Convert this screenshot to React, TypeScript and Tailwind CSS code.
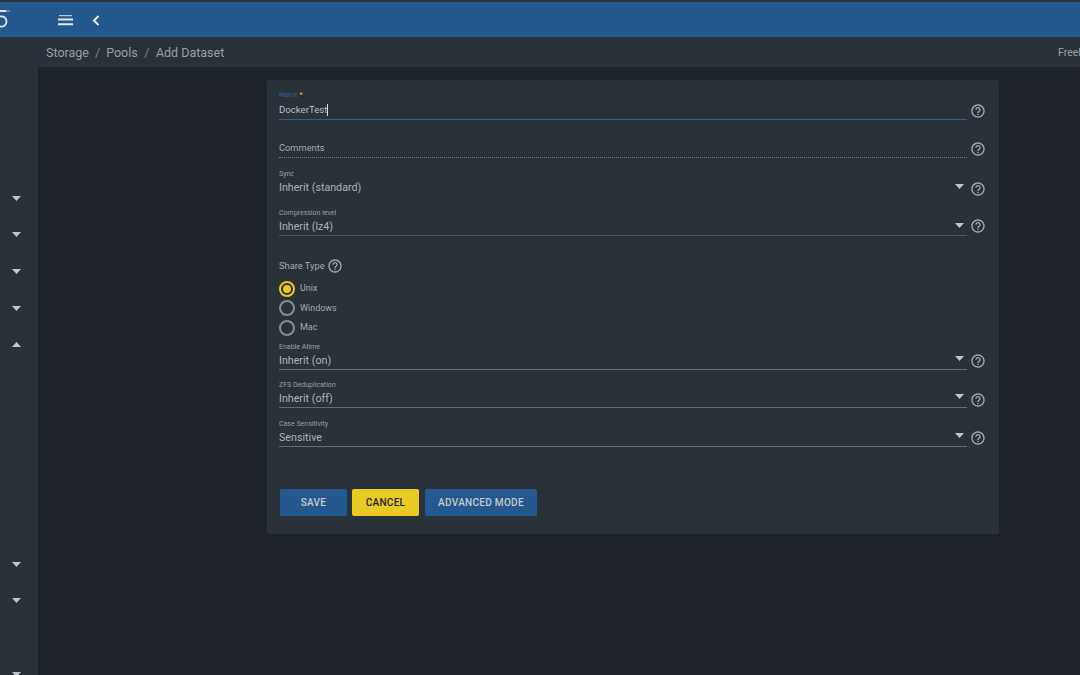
import type { ReactNode } from 'react';

const sidebarRows = ['down', 'down', 'down', 'down', 'up', '', '', '', '', '', 'down', 'down', '', 'down'];

function Caret({ up = false, className = '' }: { up?: boolean; className?: string }) {
  return (
    <svg width="9" height="5" viewBox="0 0 9 5" className={className}>
      <path d={up ? 'M0 5 4.5 0 9 5z' : 'M0 0h9L4.5 5z'} fill="#c0c5ca" />
    </svg>
  );
}

function Help({ className = '' }: { className?: string }) {
  return (
    <svg width="16" height="16" viewBox="0 0 24 24" className={className}>
      <path
        fill="#a6aaae"
        d="M11 18h2v-2h-2v2zm1-16C6.48 2 2 6.48 2 12s4.48 10 10 10 10-4.48 10-10S17.52 2 12 2zm0 18c-4.41 0-8-3.59-8-8s3.59-8 8-8 8 3.59 8 8-3.59 8-8 8zm0-14c-2.21 0-4 1.79-4 4h2c0-1.1.9-2 2-2s2 .9 2 2c0 2-3 1.75-3 5h2c0-2.25 3-2.5 3-5 0-2.21-1.79-4-4-4z"
      />
    </svg>
  );
}

function SelectField({
  label,
  value,
  className = '',
  line = 'border-[#666b70]',
  helpOffset = 'mt-[12px]',
}: {
  label: string;
  value: string;
  className?: string;
  line?: string;
  helpOffset?: string;
}) {
  return (
    <div className={`flex items-start ${className}`}>
      <div className={`w-[688px] h-[29px] pt-[1px] border-b ${line}`}>
        <div className="h-[12px] text-[7px] leading-[10px] text-[#9a9ea2]">{label}</div>
        <div className="flex items-center justify-between h-[15px]">
          <span className="text-[10.7px] text-[#aeb2b6]">{value}</span>
          <Caret className="mb-[5px] mr-[3px]" />
        </div>
      </div>
      <Help className={`ml-[2.500px] ${helpOffset}`} />
    </div>
  );
}

function Radio({ label, checked = false }: { label: string; checked?: boolean }) {
  return (
    <div className="flex items-center h-[19.500px]">
      <span
        className={`flex items-center justify-center w-[16px] h-[16px] rounded-full border-2 ${
          checked ? 'border-[#e9ca24]' : 'border-[#888c91]'
        }`}
      >
        {checked ? <span className="w-[8px] h-[8px] rounded-full bg-[#e9ca24]" /> : null}
      </span>
      <span className="ml-[5px] text-[9px] text-[#a6aaae]">{label}</span>
    </div>
  );
}

function ActionButton({ children, className }: { children: ReactNode; className: string }) {
  return (
    <button className={`h-[27px] rounded-[2px] text-[10px] font-medium tracking-[0.3px] ${className}`}>{children}</button>
  );
}

export default function App() {
  return (
    <div className="flex flex-col w-[1080px] h-[675px] overflow-hidden bg-[#1e2229] font-['Roboto',sans-serif]">
      <header className="flex items-center h-[37px] shrink-0 border-t-2 border-[#2a3138] bg-[#24598f]">
        <div className="w-[38px] h-full">
          <svg width="12" height="35" viewBox="0 0 12 35">
            <path d="M0 9h6.500M0 14.500c4-.5 6.500 1.500 6.500 5s-2.500 5.500-6.500 5" fill="none" stroke="#dfe5ea" strokeWidth="1.800" />
            <path d="M7 9h3" stroke="#dfe5ea" strokeWidth="0.700" />
          </svg>
        </div>
        <svg width="15" height="11" viewBox="0 0 15 11" className="ml-[20px] mt-[1px]">
          <path d="M1 .7h13" stroke="#e4e8ec" strokeWidth="1" />
          <path d="M0 4.500h15M0 9.300h15" stroke="#e4e8ec" strokeWidth="2" />
        </svg>
        <svg width="8" height="11" viewBox="0 0 8 11" className="ml-[19px] mt-[1px]">
          <path d="M6.500 1 2 5.500 6.500 10" fill="none" stroke="#e4e8ec" strokeWidth="2" />
        </svg>
      </header>

      <div className="flex flex-1 min-h-0">
        <aside className="w-[38px] shrink-0 pt-[143px] bg-[#2a3138]">
          {sidebarRows.map((row, i) => (
            <div key={i} className="flex items-center justify-center h-[36.6px]">
              {row ? <Caret up={row === 'up'} className="mr-[5px]" /> : null}
            </div>
          ))}
        </aside>

        <main className="flex-1 min-w-0">
          <div className="flex items-center justify-between h-[30px] pt-[2px] pl-[8px] bg-[#2a3138] text-[12.500px] text-[#9b9fa3]">
            <div className="flex items-center">
              <span>Storage</span>
              <span className="mx-[6px] text-[#7f8388]">/</span>
              <span>Pools</span>
              <span className="mx-[6.500px] text-[#7f8388]">/</span>
              <span>Add Dataset</span>
            </div>
            <div className="w-[22px] overflow-hidden whitespace-nowrap text-[10.500px]">FreeNAS</div>
          </div>

          <section className="w-[732px] h-[454px] ml-[229px] mt-[13px] pt-[10px] pl-[12px] rounded-[2px] bg-[#2a3138]">
            <div className="flex items-start">
              <div className="w-[688px] h-[30px] border-b border-[#2a6197]">
                <div className="h-[11px] text-[7px] leading-[10px] text-[#2f6396]">
                  Name <span className="text-[#e9ca24]">*</span>
                </div>
                <div className="flex items-center h-[18px] text-[9.600px] text-[#bbbfc2]">
                  DockerTest
                  <span className="w-px h-[12px] bg-[#d8dbde]" />
                </div>
              </div>
              <Help className="ml-[2.500px] mt-[13px]" />
            </div>

            <div className="flex items-start mt-[18px]">
              <div className="flex items-center w-[688px] h-[20px] border-b border-dotted border-[#777c81] text-[9.300px] text-[#a6aaae]">
                Comments
              </div>
              <Help className="ml-[2.500px] mt-[3px]" />
            </div>

            <SelectField label="Sync" value="Inherit (standard)" className="mt-[10px]" line="border-transparent" helpOffset="mt-[13px]" />
            <SelectField label="Compression level" value="Inherit (lz4)" className="mt-[10px]" line="border-[#50555b]" helpOffset="mt-[11px]" />

            <div className="flex items-center h-[15px] mt-[22px] text-[9.300px] text-[#a6aaae]">
              Share Type
              <Help className="ml-[2px]" />
            </div>
            <div className="mt-[6px]">
              <Radio label="Unix" checked />
              <Radio label="Windows" />
              <Radio label="Mac" />
            </div>

            <SelectField label="Enable Atime" value="Inherit (on)" className="mt-[3px]" />
            <SelectField label="ZFS Deduplication" value="Inherit (off)" className="mt-[9px]" helpOffset="mt-[13px]" />
            <SelectField label="Case Sensitivity" value="Sensitive" className="mt-[10px]" />

            <div className="flex mt-[42.500px] ml-[1px]">
              <ActionButton className="w-[67px] bg-[#24598f] text-[#c4c9ce]">SAVE</ActionButton>
              <ActionButton className="w-[67px] ml-[5px] bg-[#e9ca24] text-[#23272d]">CANCEL</ActionButton>
              <ActionButton className="w-[112px] ml-[6px] bg-[#24598f] text-[#c4c9ce]">ADVANCED MODE</ActionButton>
            </div>
          </section>
        </main>
      </div>
    </div>
  );
}
